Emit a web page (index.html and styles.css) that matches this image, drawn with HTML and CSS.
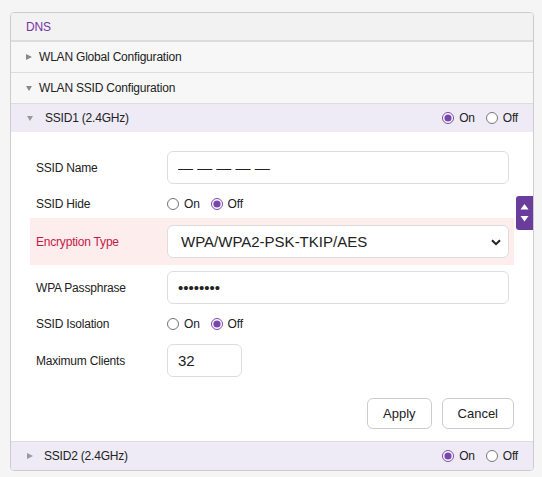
FILE: index.html
```html
<!DOCTYPE html>
<html lang="en">
<head>
    <meta charset="UTF-8">
    <meta name="viewport" content="width=device-width, initial-scale=1.0">
    <title>WLAN SSID Configuration</title>
    <link rel="stylesheet" href="styles.css">
</head>
<body>
    <div class="page">
        <div class="panel">
            <div class="bar bar-title">DNS</div>
            <div class="bar bar-group"><span class="arrow arrow-right"></span>WLAN Global Configuration</div>
            <div class="bar bar-group"><span class="arrow arrow-down"></span>WLAN SSID Configuration</div>

            <div class="bar bar-ssid">
                <span class="arrow arrow-down arrow-light"></span>
                <span class="ssid-name">SSID1 (2.4GHz)</span>
                <div class="switch">
                    <label><input type="radio" name="ssid1" checked>On</label>
                    <label><input type="radio" name="ssid1">Off</label>
                </div>
            </div>

            <form class="ssid-form" id="ssidForm">
                <div class="field">
                    <label for="ssidName">SSID Name</label>
                    <input type="text" id="ssidName" class="text-input" value="— — — — —">
                </div>
                <div class="field field-radio">
                    <label>SSID Hide</label>
                    <div class="options">
                        <label><input type="radio" name="hide">On</label>
                        <label><input type="radio" name="hide" checked>Off</label>
                    </div>
                </div>
                <div class="field field-error">
                    <label for="encType">Encryption Type</label>
                    <div class="select-wrap">
                        <select id="encType" class="text-input">
                            <option>WPA/WPA2-PSK-TKIP/AES</option>
                            <option>WPA2-PSK-AES</option>
                            <option>None</option>
                        </select>
                        <svg class="chevron" width="10" height="7" viewBox="0 0 10 7">
                            <path d="M1 1.2 L5 5.2 L9 1.2" fill="none" stroke="#222" stroke-width="2"/>
                        </svg>
                    </div>
                </div>
                <div class="field">
                    <label for="wpaKey">WPA Passphrase</label>
                    <input type="password" id="wpaKey" class="text-input" value="12345678">
                </div>
                <div class="field field-radio">
                    <label>SSID Isolation</label>
                    <div class="options">
                        <label><input type="radio" name="isolation">On</label>
                        <label><input type="radio" name="isolation" checked>Off</label>
                    </div>
                </div>
                <div class="field">
                    <label for="maxClients">Maximum Clients</label>
                    <input type="text" id="maxClients" class="text-input short" value="32">
                </div>
                <div class="actions">
                    <button type="submit">Apply</button>
                    <button type="button">Cancel</button>
                </div>
            </form>

            <div class="bar bar-ssid bar-last">
                <span class="arrow arrow-right arrow-light"></span>
                <span class="ssid-name">SSID2 (2.4GHz)</span>
                <div class="switch">
                    <label><input type="radio" name="ssid2" checked>On</label>
                    <label><input type="radio" name="ssid2">Off</label>
                </div>
            </div>

            <!-- floating page up / down -->
            <div class="scroll-nav">
                <svg width="9" height="20" viewBox="0 0 9 20">
                    <path d="M4.5 1 L8.5 6.5 L0.5 6.5 Z" fill="#fff"/>
                    <path d="M0.5 13 L8.5 13 L4.5 18.5 Z" fill="#fff"/>
                </svg>
            </div>
        </div>
    </div>
</body>
</html>
```

FILE: styles.css
```css
body {
    font-family: "Liberation Sans", Arial, sans-serif;
    background-color: #f5f5f5;
    margin: 0;
    padding: 0;
    color: #222;
}

.page {
    padding: 12px 8px 0 10px;
}

.panel {
    position: relative;
    background-color: white;
    border: 1px solid #ccc;
    border-radius: 4px;
    overflow: hidden;
}

/* Header bars */
.bar {
    display: flex;
    align-items: center;
    font-size: 12px;
    letter-spacing: -0.2px;
    padding: 0 15px;
}

.bar-title {
    height: 27px;
    background-color: #f2f2f2;
    border-bottom: 2px solid #ddd;
    color: #7434a6;
}

.bar-group {
    height: 30px;
    background-color: #f7f7f7;
    border-bottom: 1px solid #ddd;
}

.bar-ssid {
    height: 28px;
    background-color: #eeebf6;
}

.bar-last {
    border-top: 1px solid #ddd;
}

.arrow {
    display: inline-block;
    width: 0;
    height: 0;
    margin-right: 7px;
}

.arrow-right {
    border-left: 6px solid #888;
    border-top: 3.5px solid transparent;
    border-bottom: 3.5px solid transparent;
}

.arrow-down {
    border-top: 5px solid #888;
    border-left: 3.5px solid transparent;
    border-right: 3.5px solid transparent;
}

.arrow-light {
    margin-left: 1px;
    margin-right: 12px;
    border-top-color: #999;
    border-left-color: #999;
}

.arrow-right.arrow-light {
    border-left-color: #999;
    border-top-color: transparent;
    margin-right: 11px;
}

.arrow-down.arrow-light {
    border-left-color: transparent;
}

.ssid-name {
    flex: 1;
}

/* Radio pairs */
.switch,
.options {
    display: flex;
    align-items: center;
    gap: 11px;
    font-size: 12px;
    letter-spacing: -0.2px;
}

.switch label,
.options label {
    display: flex;
    align-items: center;
    gap: 5px;
}

input[type="radio"] {
    width: 12px;
    height: 12px;
    margin: 0;
    accent-color: #7a46ae;
}

/* Form */
.ssid-form {
    padding: 13px 19px 12px;
}

.field {
    display: flex;
    align-items: center;
    height: 45px;
    padding: 0 5px 0 6px;
}

.field > label {
    width: 131px;
    flex-shrink: 0;
    font-size: 12px;
    letter-spacing: -0.2px;
}

.field-radio {
    height: 28px;
}

.field-error {
    height: 47px;
    background-color: #fdeded;
}

.field-error > label {
    color: #c61a45;
}

.text-input {
    flex: 1;
    min-width: 0;
    height: 33px;
    box-sizing: border-box;
    border: 1px solid #ddd;
    border-radius: 6px;
    background-color: white;
    padding: 0 10px;
    font-family: "Liberation Sans", Arial, sans-serif;
    font-size: 15px;
    color: #222;
    outline: none;
}

.text-input.short {
    flex: none;
    width: 75px;
}

.select-wrap {
    flex: 1;
    position: relative;
    display: flex;
}

.select-wrap select {
    appearance: none;
    padding-left: 13px;
}

.chevron {
    position: absolute;
    right: 8px;
    top: 14px;
}

.actions {
    display: flex;
    justify-content: flex-end;
    gap: 10px;
    margin-top: 15px;
}

button {
    height: 31px;
    padding: 0 15px;
    background-color: white;
    border: 1px solid #ccc;
    border-radius: 6px;
    font-family: "Liberation Sans", Arial, sans-serif;
    font-size: 13px;
    color: #222;
    cursor: pointer;
}

button:hover {
    background-color: #f4f4f4;
}

.scroll-nav {
    position: absolute;
    right: 0;
    top: 183px;
    width: 17px;
    height: 34px;
    background-color: #6a3d9c;
    border-radius: 3px 0 0 3px;
    display: flex;
    align-items: center;
    justify-content: center;
}
```
